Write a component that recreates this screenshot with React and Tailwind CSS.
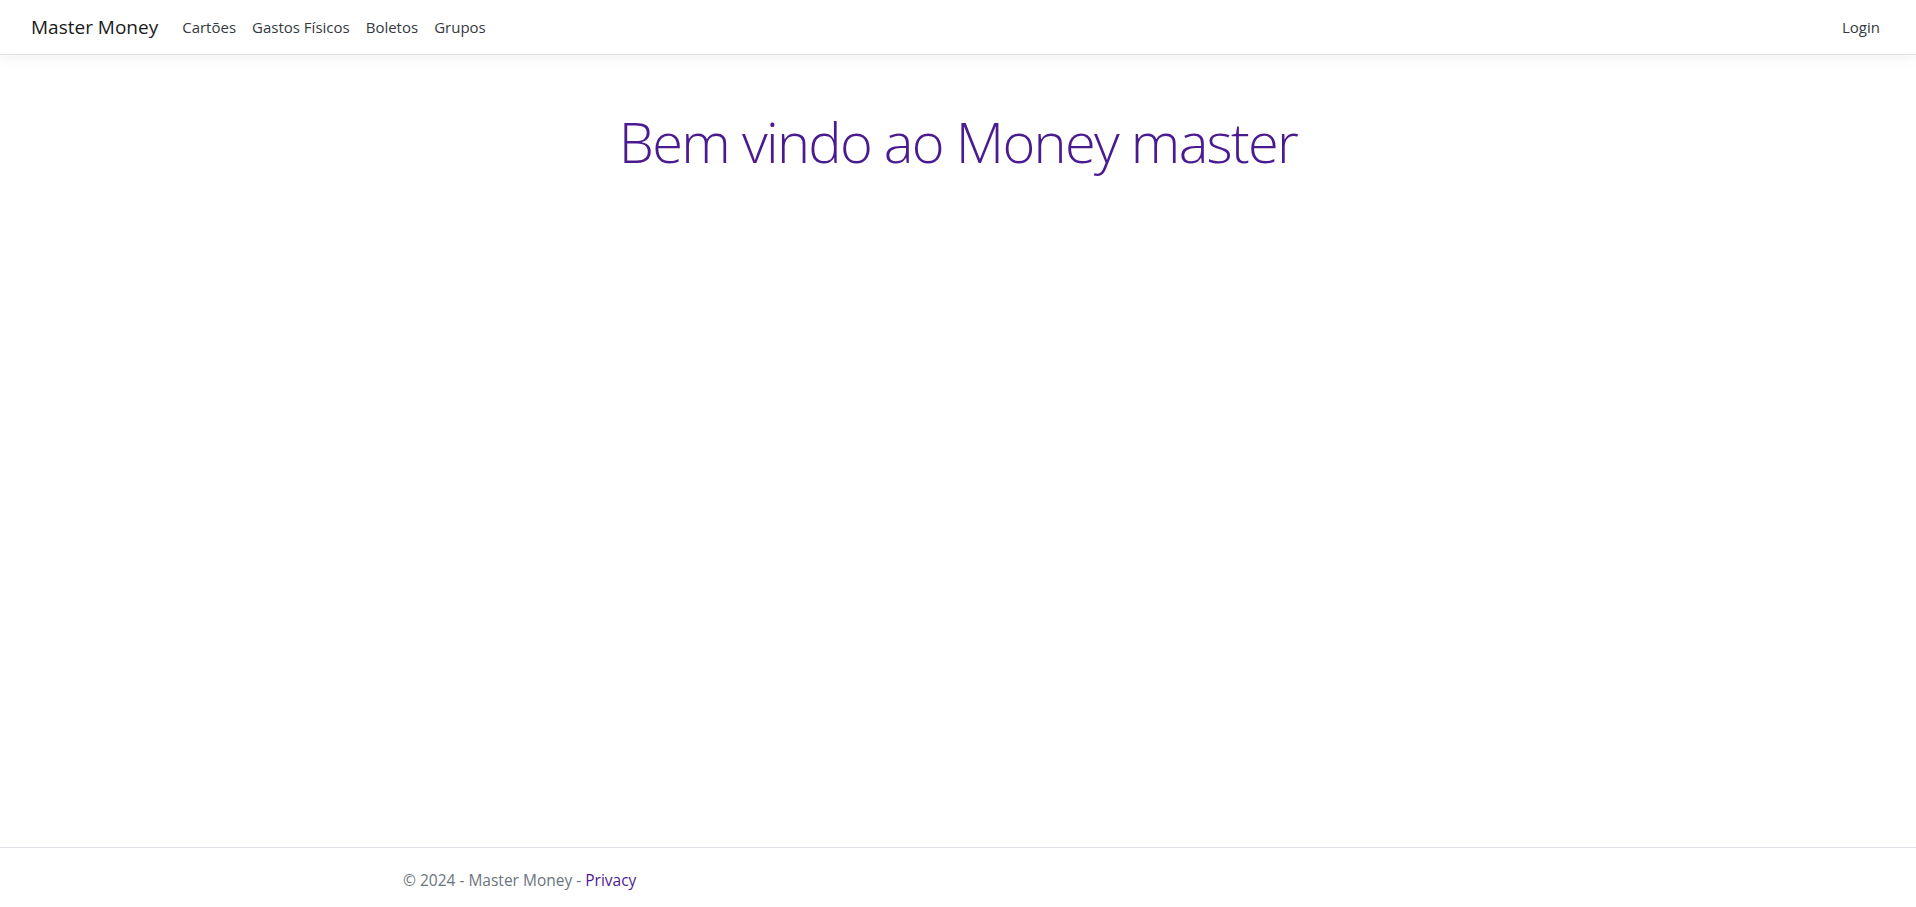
export default function App() {
  return (
    <div className="flex min-h-screen flex-col bg-white font-['Open_Sans','Noto_Sans',sans-serif]">
      <header className="relative z-10 flex h-[55px] items-center justify-between border-b border-[#dee2e6] bg-white pl-[31px] pr-[28px] shadow-[0_4px_12px_rgba(0,0,0,0.05)]">
        <nav className="flex items-center">
          <a className="mr-4 text-[19px] leading-[30px] text-[#1a1a1a]">Master Money</a>
          <ul className="flex items-center">
            {["Cartões", "Gastos Físicos", "Boletos", "Grupos"].map((t) => (
              <li key={t}>
                <a className="block px-2 text-[15px] leading-6 text-[#343a40]">{t}</a>
              </li>
            ))}
          </ul>
        </nav>
        <a className="block px-2 text-[15px] leading-6 text-[#343a40]">Login</a>
      </header>
      <main className="flex-1">
        <div className="pt-[53px] text-center">
          <h1 className="text-[56px] font-light leading-[1.2] tracking-[-1.7px] text-[#4a1a8f]">
            Bem vindo ao Money master
          </h1>
        </div>
      </main>
      <footer className="h-[60px] border-t border-[#dee2e6] pt-[6px] text-[15.5px] leading-[53px] text-[#6c757d]">
        <div className="mx-auto w-[1140px] px-[15px]">
          © 2024 - Master Money - <a className="text-[#4f1a95]">Privacy</a>
        </div>
      </footer>
    </div>
  );
}
